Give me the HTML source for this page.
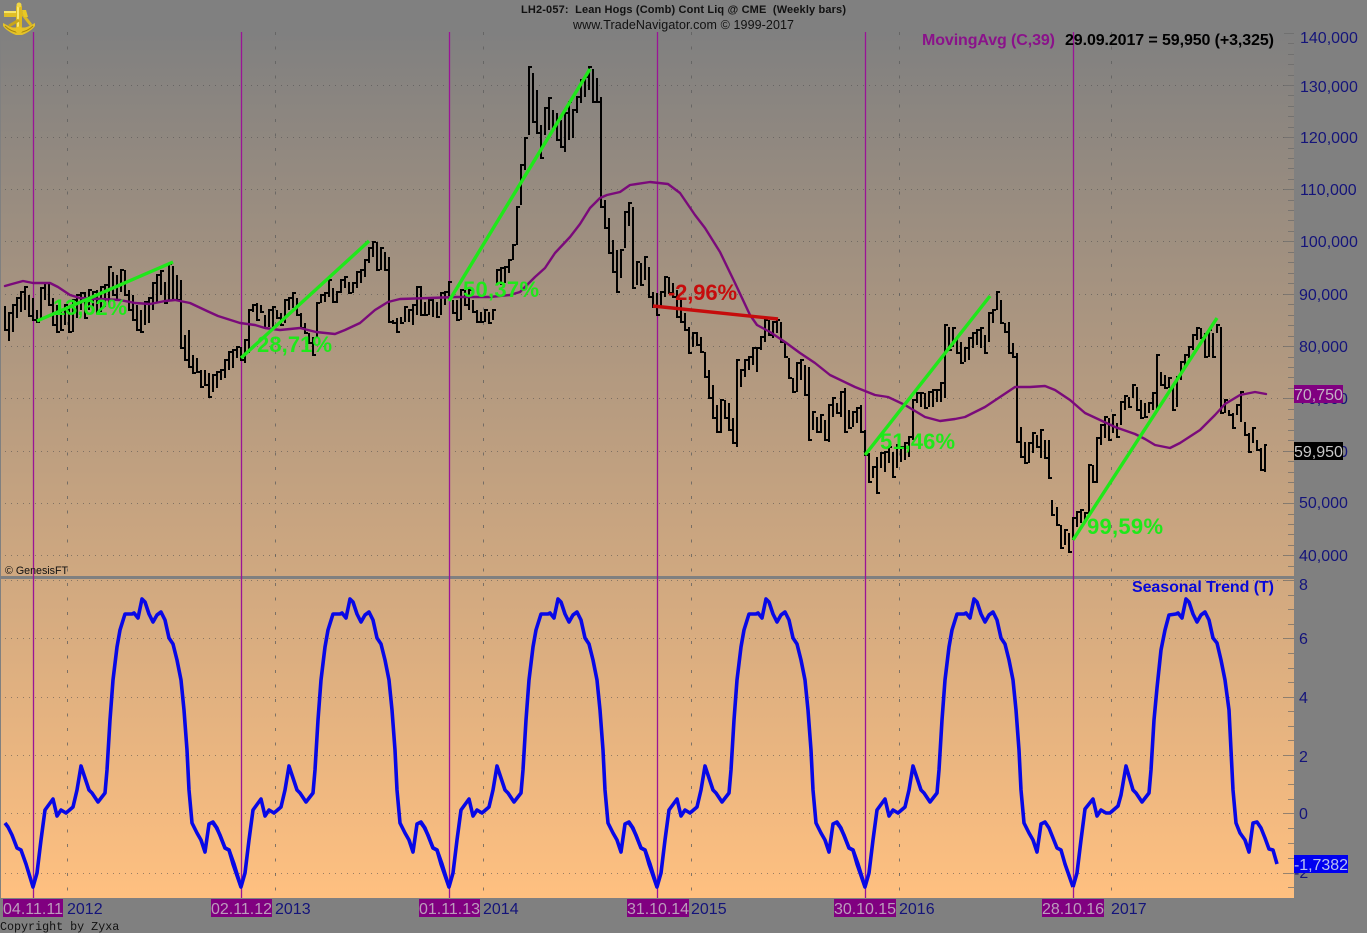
<!DOCTYPE html>
<html><head><meta charset="utf-8"><title>Lean Hogs</title>
<style>html,body{margin:0;padding:0;background:#808080;width:1367px;height:933px;overflow:hidden}svg{display:block}text{font-family:"Liberation Sans",sans-serif}</style></head>
<body>
<svg xmlns="http://www.w3.org/2000/svg" width="1367" height="933" viewBox="0 0 1367 933">
<defs>
<linearGradient id="bg" x1="0" y1="32" x2="0" y2="898" gradientUnits="userSpaceOnUse"><stop offset="0" stop-color="#808080"/><stop offset="1" stop-color="#ffc080"/></linearGradient>
<path id="cy" fill="none" stroke="#0808e6" stroke-width="3.6" stroke-linejoin="round" d="M5 823L8 827 12 835 17 848 21 850 26 864 33 887 37 873 41 840 45 810 53 799 57 816 61 810 66 813 73 807 77 790 81 766 89 790 92 793 98 802 105 793 107 770 110 720 113 680 117 647 120 630 125 614 132 614 134 613 138 618 142 599 145 602 149 614 153 622 157 615 161 612 165 620 169 638 173 644 177 660 181 680 184 710 187 750 189 790 192 823 197 833 201 840 205 852 209 824 213 822 217 828 221 838 225 848 229 850 233 864 241 887"/>
</defs>
<rect width="1367" height="933" fill="#808080"/>
<rect x="1" y="32" width="1293" height="866" fill="url(#bg)"/>

<!-- horizontal dotted grid -->
<g stroke="#4a4a4a" stroke-opacity=".55" stroke-width="1" stroke-dasharray="1 5" shape-rendering="crispEdges">
<path d="M5 85.5H1285M5 137.5H1285M5 189.5H1285M5 241.5H1285M5 294.5H1285M5 346.5H1285M5 398.5H1285M5 451.5H1285M5 503.5H1285M5 555.5H1285M5 580.5H1285M5 638.5H1285M5 697.5H1285M5 755.5H1285M5 813.5H1285M5 873.5H1285"/>
</g>
<!-- year dashed grid -->
<g stroke="#5c5c5c" stroke-opacity=".75" stroke-width="1" stroke-dasharray="3 11.5" shape-rendering="crispEdges">
<path d="M67.5 32V898M275.5 32V898M483.5 32V898M691.5 32V898M899.5 32V898M1111.5 32V898"/>
</g>
<!-- axis ticks -->
<g stroke="#6a6a6a" stroke-opacity=".7" stroke-width="1" shape-rendering="crispEdges">
<path d="M1284 85.5h10M1288 95.5h6M1288 106.5h6M1288 116.5h6M1288 127.5h6M1284 137.5h10M1288 148.5h6M1288 158.5h6M1288 168.5h6M1288 179.5h6M1284 189.5h10M1288 200.5h6M1288 210.5h6M1288 220.5h6M1288 231.5h6M1284 241.5h10M1288 252.5h6M1288 262.5h6M1288 273.5h6M1288 283.5h6M1284 294.5h10M1288 304.5h6M1288 315.5h6M1288 325.5h6M1288 336.5h6M1284 346.5h10M1288 357.5h6M1288 367.5h6M1288 377.5h6M1288 388.5h6M1284 398.5h10M1288 409.5h6M1288 419.5h6M1288 430.5h6M1288 440.5h6M1284 451.5h10M1288 461.5h6M1288 472.5h6M1288 482.5h6M1288 492.5h6M1284 503.5h10M1288 514.5h6M1288 524.5h6M1288 534.5h6M1288 545.5h6M1284 555.5h10M1288 566.5h6M1288 43.5h6M1288 54.5h6M1288 64.5h6M1288 75.5h6M1284 33.5h10"/>
<path d="M1284 580.5h10M1288 595.5h6M1288 609.5h6M1288 624.5h6M1284 638.5h10M1288 653.5h6M1288 668.5h6M1288 682.5h6M1284 697.5h10M1288 711.5h6M1288 726.5h6M1288 740.5h6M1284 755.5h10M1288 770.5h6M1288 784.5h6M1288 799.5h6M1284 813.5h10M1288 828.5h6M1288 843.5h6M1288 858.5h6M1284 873.5h10M1288 887.5h6"/>
</g>
<!-- divider -->
<rect x="0" y="576" width="1294" height="3" fill="#808080"/>
<!-- event verticals -->
<g stroke="#9a1496" stroke-width="1.3" fill="none">
<path d="M33.5 32V898M241.5 32V898M449.5 32V898M657.5 32V898M865.5 32V898M1073.5 32V898"/>
</g>

<!-- price bars -->
<path fill="none" stroke="#000" stroke-width="2" d="M5 306V330h3M9 341V313h3M13 332V305h3M17 318V298h3M21 312V292h3M25 310V287h3M29 295V316h3M33 298V320h3M37 310V322h3M41 320V288h3M45 300V283h3M49 282V305h3M53 298V325h3M57 305V332h3M61 310V330h3M65 325V305h3M69 308V332h3M73 332V300h3M77 318V295h3M81 310V293h3M85 292V318h3M89 310V290h3M93 312V292h3M97 290V313h3M101 312V287h3M105 307V285h3M109 305V267h3M113 272V295h3M117 275V300h3M121 292V270h3M125 270V295h3M129 290V310h3M133 295V320h3M137 305V330h3M141 310V332h3M145 325V302h3M149 323V298h3M153 310V283h3M157 302V275h3M161 295V271h3M165 282V303h3M169 300V264h3M173 266V300h3M177 275V300h3M181 280V348h3M185 335V360h3M189 330V367h3M193 355V373h3M197 358V372h3M201 370V387h3M205 370V385h3M209 373V397h3M213 392V375h3M217 388V372h3M221 380V370h3M225 378V360h3M229 370V352h3M233 368V350h3M237 358V347h3M241 347V360h3M245 363V340h3M249 353V310h3M253 312V305h3M257 303V320h3M261 305V312h3M265 315V328h3M269 327V310h3M273 327V307h3M277 310V318h3M281 313V325h3M285 323V300h3M289 310V298h3M293 308V293h3M297 298V315h3M301 313V328h3M305 323V333h3M309 333V343h3M313 337V355h3M317 337V303h3M321 303V295h3M325 302V293h3M329 297V280h3M333 288V302h3M337 303V292h3M341 293V280h3M345 288V277h3M349 282V293h3M353 293V283h3M357 288V272h3M361 283V270h3M365 277V260h3M369 263V248h3M373 257V242h3M377 242V270h3M381 270V248h3M385 252V270h3M389 257V322h3M393 320V323h3M397 318V332h3M401 317V323h3M405 322V307h3M409 322V310h3M413 325V305h3M417 315V287h3M421 286V315h3M425 302V315h3M429 315V300h3M433 317V298h3M437 302V317h3M441 315V293h3M445 305V292h3M449 300V282h3M453 300V313h3M457 300V320h3M461 320V290h3M465 290V305h3M469 310V290h3M473 300V312h3M477 310V322h3M481 312V322h3M485 322V310h3M489 312V323h3M493 320V310h3M497 285V270h3M501 285V268h3M505 283V267h3M509 273V260h3M513 260V245h3M517 245V207h3M521 205V165h3M525 170V138h3M529 135V67h3M533 73V122h3M537 90V133h3M541 125V158h3M545 135V108h3M549 130V98h3M553 110V127h3M557 113V140h3M561 120V147h3M565 152V113h3M569 140V102h3M573 138V110h3M577 113V97h3M581 103V80h3M585 97V77h3M589 90V67h3M593 69V102h3M597 78V102h3M601 97V207h3M605 200V228h3M609 218V253h3M613 240V272h3M617 250V292h3M621 278V250h3M625 248V212h3M629 226V203h3M633 207V288h3M637 285V262h3M641 263V285h3M645 280V257h3M649 267V297h3M653 292V307h3M657 293V315h3M661 307V292h3M665 297V277h3M669 277V293h3M673 283V297h3M677 290V317h3M681 300V322h3M685 313V330h3M689 327V353h3M693 347V333h3M697 332V345h3M701 337V352h3M705 352V377h3M709 370V398h3M713 385V418h3M717 405V432h3M721 433V400h3M725 400V418h3M729 403V430h3M733 418V443h3M737 447V360h3M741 387V370h3M745 377V360h3M749 370V357h3M753 365V348h3M757 372V348h3M761 350V337h3M765 342V320h3M769 320V335h3M773 338V322h3M777 333V320h3M781 322V342h3M785 342V357h3M789 358V378h3M793 378V392h3M797 392V363h3M801 380V360h3M805 365V395h3M809 367V440h3M813 430V412h3M817 417V432h3M821 433V415h3M825 420V440h3M829 442V405h3M833 417V398h3M837 403V413h3M841 417V392h3M845 388V432h3M849 410V428h3M853 427V412h3M857 423V408h3M861 405V432h3M865 430V455h3M869 453V482h3M873 478V467h3M877 457V493h3M881 468V453h3M885 472V452h3M889 463V447h3M893 452V477h3M897 468V445h3M901 462V447h3M905 460V443h3M909 457V437h3M913 440V400h3M917 403V393h3M921 407V393h3M925 393V408h3M929 407V392h3M933 407V390h3M937 402V390h3M941 402V383h3M945 398V325h3M949 327V350h3M953 347V328h3M957 338V353h3M961 342V363h3M965 362V348h3M969 360V338h3M973 348V333h3M977 345V330h3M981 348V328h3M985 335V353h3M989 342V313h3M993 323V310h3M997 310V292h3M1001 300V323h3M1005 323V332h3M1009 322V353h3M1013 343V357h3M1017 353V442h3M1021 427V457h3M1025 442V463h3M1029 463V443h3M1033 453V433h3M1037 435V447h3M1041 458V430h3M1045 440V458h3M1049 440V478h3M1052 500V515h3M1057 507V525h3M1061 525V548h3M1065 545V530h3M1069 533V552h3M1073 540V518h3M1077 527V512h3M1081 523V510h3M1085 522V513h3M1089 517V465h3M1093 465V482h3M1097 483V438h3M1101 445V425h3M1105 438V417h3M1109 418V440h3M1113 433V415h3M1117 423V437h3M1121 425V402h3M1125 410V396h3M1129 397V407h3M1133 398V385h3M1137 387V410h3M1141 400V418h3M1145 403V417h3M1149 413V403h3M1153 410V393h3M1157 410V355h3M1161 372V385h3M1165 375V388h3M1169 388V378h3M1173 387V410h3M1177 407V377h3M1181 380V362h3M1185 367V355h3M1189 358V347h3M1193 350V335h3M1197 340V328h3M1201 328V338h3M1205 333V357h3M1209 357V330h3M1213 333V357h3M1217 333V325h3M1221 327V413h3M1225 413V400h3M1229 410V415h3M1233 413V428h3M1237 415V405h3M1241 422V392h3M1245 422V435h3M1249 433V452h3M1253 443V428h3M1257 440V450h3M1261 448V470h3M1265 472V445h2"/>

<!-- moving average -->
<path fill="none" stroke="#7a0a7a" stroke-width="2.4" stroke-linejoin="round" stroke-linecap="round" d="M5 286L12 284 23 281 33 283 50 283 58 287 70 295 80 298 100 299 120 300 135 303 150 304 165 301 175 300 190 303 207 311 218 316 240 323 255 325 265 328 280 330 300 328 316 332 335 334 345 330 360 323 375 310 388 302 400 299 430 298 455 297 470 297 490 297 510 295 520 292 535 277 545 268 555 253 570 237 580 224 590 208 600 198 607 195 620 192 630 185 650 182 668 184 680 193 695 215 705 228 720 252 735 283 750 315 757 325 770 332 785 342 800 353 815 363 830 375 855 387 875 395 888 397 905 405 925 417 940 421 955 419 965 417 985 407 1000 397 1015 387 1030 387 1045 386 1055 390 1070 400 1085 413 1100 420 1115 427 1135 434 1145 439 1155 445 1170 448 1180 443 1200 430 1215 415 1225 404 1240 395 1255 392 1266 394"/>

<!-- trend lines -->
<g stroke="#1fe81a" stroke-width="3.4" fill="none">
<path d="M37 321L173 262"/><path d="M241 358L369 241"/><path d="M449 301L590 69"/><path d="M865 455L990 296"/><path d="M1073 540L1217 318"/>
</g>
<path d="M653 306L778 319" stroke="#c60c0c" stroke-width="3.4" fill="none"/>

<!-- percent labels -->
<g font-size="22" font-weight="700" fill="#1fe81a">
<text x="53" y="315" textLength="74">13,62%</text>
<text x="257" y="352" textLength="75">28,71%</text>
<text x="463" y="297" textLength="76">50,37%</text>
<text x="880" y="449" textLength="75">51,46%</text>
<text x="1087" y="534" textLength="76">99,59%</text>
</g>
<text x="668" y="300" font-size="22" font-weight="700" fill="#c60c0c" textLength="69">-2,96%</text>

<!-- seasonal curve -->
<use href="#cy"/>
<use href="#cy" x="208"/>
<use href="#cy" x="416"/>
<use href="#cy" x="624"/>
<use href="#cy" x="832"/>
<path fill="none" stroke="#0808e6" stroke-width="3.6" stroke-linejoin="round" d="M1073 887L1077 873 1081 840 1085 809 1093 799 1097 816 1101 810 1106 813 1110 813 1118 806 1121 795 1126 766 1133 790 1136 793 1142 802 1149 793 1151 770 1154 720 1157 688 1161 650 1165 630 1169 615 1176 614 1178 613 1182 618 1186 599 1189 602 1193 614 1197 622 1201 615 1205 612 1209 620 1213 638 1217 643 1221 660 1225 680 1229 710 1231 750 1233 790 1236 823 1240 833 1245 840 1249 852 1253 823 1257 822 1261 828 1265 838 1269 849 1273 850 1277 864"/>

<!-- logo -->
<g>
<path d="M3 23C7 25 10 27 13 27.500L25 27.500C28 27 31 25 35 23L35 26C32 30 27 33 22 35L16 35C11 33 6 30 3 26Z" fill="#e4c228"/>
<path d="M5 26C9 30 13 32 19 32.500C25 32 29 30 33 26" fill="none" stroke="#a8860e" stroke-width="1"/>
<rect x="4" y="11" width="13" height="6" fill="#e0be26"/>
<rect x="4" y="11" width="13" height="2" fill="#f6e468"/>
<rect x="16" y="6" width="6" height="26" fill="#dcb820"/>
<rect x="17" y="6" width="2" height="24" fill="#f8e870"/>
<circle cx="19" cy="5" r="2.500" fill="#f0d644"/>
<path d="M20 11L31 25" stroke="#dcb820" stroke-width="3" fill="none"/>
<path d="M19 20L9 26" stroke="#c8a618" stroke-width="3" fill="none"/>
<path d="M22 10h4l2 7h-4z" fill="#e8c824"/>
<circle cx="19" cy="30" r="3.500" fill="#e8c422"/>
</g>

<!-- header -->
<text x="521" y="13" font-size="11" font-weight="700" fill="#111" textLength="325" xml:space="preserve">LH2-057:  Lean Hogs (Comb) Cont Liq @ CME  (Weekly bars)</text>
<text x="573" y="29" font-size="12.500" fill="#111" textLength="221">www.TradeNavigator.com © 1999-2017</text>
<text x="922" y="45" font-size="16" font-weight="700" fill="#8a128a" textLength="133">MovingAvg (C,39)</text>
<text x="1065" y="45" font-size="16" font-weight="700" fill="#000" textLength="209">29.09.2017 = 59,950 (+3,325)</text>
<text x="1132" y="592" font-size="16" font-weight="700" fill="#0808d8" textLength="142">Seasonal Trend (T)</text>
<text x="5" y="574" font-size="10.700" fill="#111" textLength="63">© GenesisFT</text>

<!-- price axis -->
<g font-size="16" fill="#14147a">
<text x="1300" y="43">140,000</text>
<text x="1300" y="92">130,000</text>
<text x="1300" y="143">120,000</text>
<text x="1300" y="195">110,000</text>
<text x="1300" y="247">100,000</text>
<text x="1299" y="300">90,000</text>
<text x="1299" y="352">80,000</text>
<text x="1299" y="404">70,000</text>
<text x="1299" y="457">60,000</text>
<text x="1299" y="508">50,000</text>
<text x="1299" y="561">40,000</text>
<text x="1299" y="590">8</text>
<text x="1299" y="644">6</text>
<text x="1299" y="703">4</text>
<text x="1299" y="762">2</text>
<text x="1299" y="819">0</text>
<text x="1294" y="878">-2</text>
</g>
<rect x="1294" y="385" width="49" height="18" fill="#800080"/>
<text x="1294" y="400" font-size="16" fill="#c4b0c4">70,750</text>
<rect x="1294" y="442" width="49" height="18" fill="#000"/>
<text x="1294" y="457" font-size="16" fill="#c8c8c8">59,950</text>
<rect x="1294" y="855" width="54" height="18" fill="#0000f0"/>
<text x="1294" y="870" font-size="16" fill="#b8c0f0" textLength="54">-1,7382</text>

<!-- date axis -->
<g fill="#800080">
<rect x="3" y="899" width="60" height="18"/>
<rect x="211" y="899" width="61" height="18"/>
<rect x="419" y="899" width="61" height="18"/>
<rect x="627" y="899" width="62" height="18"/>
<rect x="834" y="899" width="62" height="18"/>
<rect x="1042" y="899" width="62" height="18"/>
</g>
<g font-size="16" fill="#bc9cbc">
<text x="3" y="914" textLength="60">04.11.11</text>
<text x="211" y="914" textLength="61">02.11.12</text>
<text x="419" y="914" textLength="61">01.11.13</text>
<text x="627" y="914" textLength="62">31.10.14</text>
<text x="834" y="914" textLength="62">30.10.15</text>
<text x="1042" y="914" textLength="62">28.10.16</text>
</g>
<g font-size="16" fill="#14147a">
<text x="67" y="914">2012</text>
<text x="275" y="914">2013</text>
<text x="483" y="914">2014</text>
<text x="691" y="914">2015</text>
<text x="899" y="914">2016</text>
<text x="1111" y="914">2017</text>
</g>
<text x="0" y="930" font-size="11.700" fill="#111" style="font-family:'Liberation Mono',monospace">Copyright by Zyxa</text>
</svg>
</body></html>
